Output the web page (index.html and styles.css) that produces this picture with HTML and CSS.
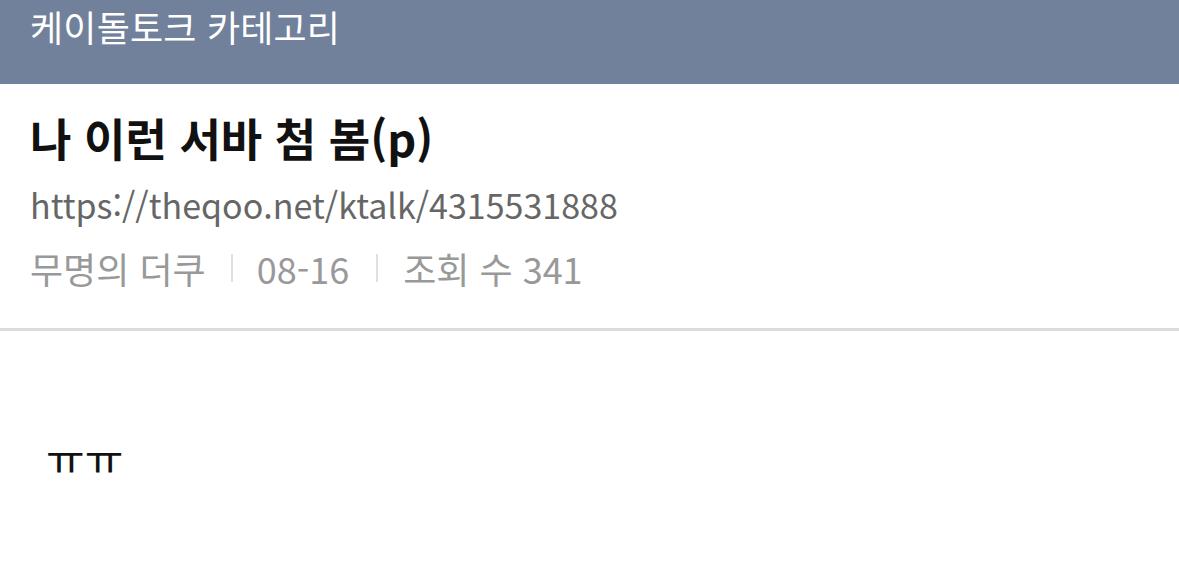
FILE: index.html
```html
<!DOCTYPE html>
<html lang="ko">
<head>
<meta charset="utf-8">
<link rel="stylesheet" href="styles.css">
</head>
<body>
<header class="topbar">케이돌토크 카테고리</header>
<section class="post-head">
  <h1 class="title">나 이런 서바 첨 봄(p)</h1>
  <div class="url">https://theqoo.net/ktalk/4315531888</div>
  <div class="meta">
    <span>무명의 더쿠</span><span class="sep"></span><span>08-16</span><span class="sep"></span><span>조회 수 341</span>
  </div>
</section>
<article class="post-body">
  <p>ㅠㅠ</p>
</article>
</body>
</html>
```
FILE: styles.css
```css
html, body {
  margin: 0;
  padding: 0;
  background: #fff;
  font-family: "Noto Sans CJK KR", "Noto Sans", sans-serif;
}
.topbar {
  height: 84px;
  box-sizing: border-box;
  background: #71819c;
  color: #fff;
  font-size: 36px;
  line-height: 52px;
  padding-left: 30px;
  letter-spacing: 0.2px;
}
.post-head {
  padding: 0 30px;
  height: 247px;
  box-sizing: border-box;
  border-bottom: 3px solid #dcdcdc;
  display: flex;
  flex-direction: column;
}
.title {
  margin: 25px 0 0 0;
  font-size: 45px;
  font-weight: 700;
  line-height: 58px;
  color: #111;
  letter-spacing: 0;
}
.url {
  margin-top: 10px;
  font-size: 34px;
  line-height: 56px;
  color: #666;
}
.meta {
  margin-top: 7px;
  display: flex;
  align-items: center;
  font-size: 36px;
  line-height: 56px;
  color: #999;
}
.sep {
  display: inline-block;
  width: 2px;
  height: 28px;
  background: #e0e0e0;
  margin: 0 24px 0 25px;
}
.sep + span + .sep {
  margin: 0 25px 0 27px;
}
.post-body {
  padding: 101px 46px 0 46px;
}
.post-body p {
  margin: 0;
  font-size: 42px;
  line-height: 50px;
  color: #111;
}
```
